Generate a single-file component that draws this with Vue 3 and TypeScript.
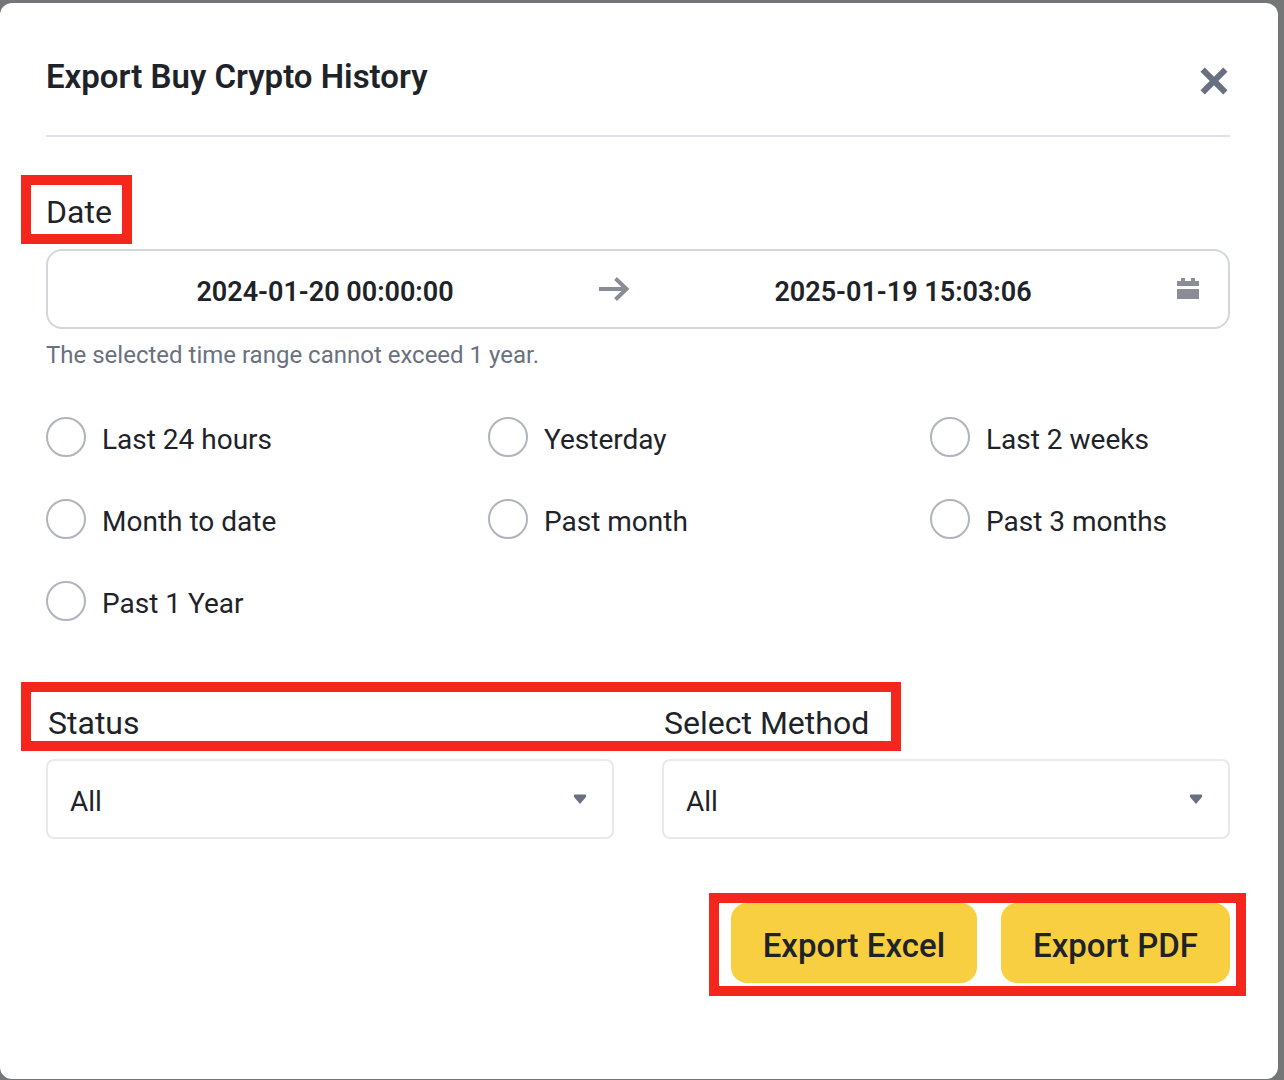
<script setup lang="ts">
import { ref } from 'vue'

interface Range {
  value: string
  label: string
}

const ranges: Range[] = [
  { value: '24h', label: 'Last 24 hours' },
  { value: 'yesterday', label: 'Yesterday' },
  { value: '2w', label: 'Last 2 weeks' },
  { value: 'mtd', label: 'Month to date' },
  { value: '1m', label: 'Past month' },
  { value: '3m', label: 'Past 3 months' },
  { value: '1y', label: 'Past 1 Year' },
]

const filters = [
  { id: 'status', label: 'Status' },
  { id: 'method', label: 'Select Method' },
]

const start = ref('2024-01-20 00:00:00')
const end = ref('2025-01-19 15:03:06')
const range = ref('')
const selected = ref<Record<string, string>>({ status: 'All', method: 'All' })
</script>

<template>
  <div class="backdrop">
    <main class="dialog" role="dialog" aria-labelledby="dialog-title">
      <header class="header">
        <h1 id="dialog-title" class="title">Export Buy Crypto History</h1>
        <button class="close" type="button" aria-label="Close">
          <svg viewBox="0 0 32 32" width="32" height="32" aria-hidden="true">
            <path d="M4.6 4.6 27.4 27.4M27.4 4.6 4.6 27.4" stroke="currentColor" stroke-width="6" />
          </svg>
        </button>
      </header>

      <section class="date">
        <label class="label date-label" for="start">Date<span class="mark mark-date"></span></label>
        <div class="range-field">
          <input id="start" v-model="start" class="range-input" type="text" />
          <svg class="arrow" viewBox="0 0 32 32" width="32" height="32" aria-hidden="true">
            <path d="M1 16H29M17.5 5.5 28.5 16 17.5 26.5" fill="none" stroke="currentColor" stroke-width="4" />
          </svg>
          <input id="end" v-model="end" class="range-input" type="text" aria-label="End date" />
          <svg class="calendar" viewBox="0 0 24 24" width="24" height="24" aria-hidden="true">
            <path d="M1 4H5V1H9V4H15V1H19V4H23V9H1ZM1 12H23V22H1Z" fill="currentColor" />
          </svg>
        </div>
        <p class="hint">The selected time range cannot exceed 1 year.</p>
      </section>

      <div class="presets" role="radiogroup" aria-label="Date range">
        <label v-for="r in ranges" :key="r.value" class="preset">
          <input v-model="range" class="radio" type="radio" name="range" :value="r.value" />
          <span class="preset-text">{{ r.label }}</span>
        </label>
      </div>

      <section class="filters">
        <div v-for="f in filters" :key="f.id" class="filter">
          <label class="label filter-label" :for="f.id">{{ f.label }}</label>
          <div class="select-wrap">
            <select :id="f.id" v-model="selected[f.id]" class="select">
              <option>All</option>
            </select>
            <svg class="caret" viewBox="0 0 12 10" width="12" height="10" aria-hidden="true">
              <path d="M0 0.5H12V3L6 10 0 3Z" fill="currentColor" />
            </svg>
          </div>
        </div>
        <span class="mark mark-filters"></span>
      </section>

      <footer class="footer">
        <div class="actions">
          <button class="export" type="button">Export Excel</button>
          <button class="export" type="button">Export PDF</button>
          <span class="mark mark-actions"></span>
        </div>
      </footer>
    </main>
  </div>
</template>

<style>
body {
  margin: 0;
}
</style>

<style scoped>
.backdrop,
.backdrop * {
  box-sizing: border-box;
}

.backdrop {
  display: flex;
  min-height: 100vh;
  padding: 3px 6px 1px 0;
  background: #757678;
  color: #1e2329;
  font-family: Roboto, 'Liberation Sans', sans-serif;
}

.dialog {
  flex: 1;
  min-width: 0;
  padding: 54px 48px 48px 46px;
  border-radius: 12px;
  background: #fff;
}

.header {
  display: flex;
  align-items: center;
  justify-content: space-between;
  padding-bottom: 38px;
  border-bottom: 2px solid #dfe2e6;
}

.title {
  margin: 0;
  font-size: 33px;
  font-weight: 600;
  line-height: 40px;
}

.close {
  width: 32px;
  height: 32px;
  margin-top: 8px;
  padding: 0;
  border: 0;
  background: none;
  color: #697180;
}

.close svg,
.arrow,
.calendar {
  display: block;
}

.date {
  display: flex;
  flex-direction: column;
  align-items: flex-start;
  margin-top: 55px;
}

.label {
  display: block;
  font-size: 32px;
  line-height: 40px;
}

.date-label {
  position: relative;
  margin-bottom: 17px;
}

.filter-label {
  margin-bottom: 16px;
  padding-left: 2px;
}

.range-field {
  display: flex;
  align-items: center;
  width: 100%;
  height: 80px;
  padding-right: 24px;
  border: 2px solid #d3d7dc;
  border-radius: 16px;
  color: #8a8d95;
}

.range-input {
  flex: 1;
  min-width: 0;
  height: 100%;
  padding: 6px 0 0;
  border: 0;
  outline: 0;
  background: none;
  color: #1e2329;
  font: 600 27px Roboto, 'Liberation Sans', sans-serif;
  text-align: center;
}

.arrow {
  flex: none;
  margin: 0 -4px;
}

.calendar {
  flex: none;
  margin: 0 4px 0 -4px;
}

.hint {
  margin: 10px 0 0;
  color: #697180;
  font-size: 24px;
  line-height: 32px;
}

.presets {
  display: grid;
  grid-template-columns: repeat(3, 1fr);
  gap: 42px 142px;
  margin-top: 46px;
}

.preset {
  display: flex;
  align-items: center;
  gap: 16px;
  height: 40px;
  font-size: 28px;
  white-space: nowrap;
}

.preset-text {
  padding-top: 4px;
}

.radio {
  flex: none;
  appearance: none;
  width: 40px;
  height: 40px;
  margin: 0;
  border: 2px solid #b0b4bc;
  border-radius: 50%;
}

.radio:checked {
  border: 12px solid #f8cf40;
}

.filters {
  position: relative;
  display: grid;
  grid-template-columns: 1fr 1fr;
  gap: 48px;
  margin-top: 82px;
}

.select-wrap {
  display: grid;
  align-items: center;
}

.select-wrap > * {
  grid-area: 1 / 1;
}

.select {
  appearance: none;
  width: 100%;
  height: 80px;
  padding: 4px 64px 0 22px;
  border: 2px solid #e9e9e9;
  border-radius: 8px;
  background: #fff;
  color: #1e2329;
  font: 400 28px Roboto, 'Liberation Sans', sans-serif;
}

.caret {
  justify-self: end;
  margin-right: 28px;
  color: #697180;
  pointer-events: none;
}

.footer {
  display: flex;
  justify-content: flex-end;
  margin-top: 64px;
}

.actions {
  position: relative;
  display: flex;
  gap: 24px;
}

.export {
  height: 80px;
  padding: 4px 32px 0;
  border: 0;
  border-radius: 16px;
  background: #f8cf40;
  color: #1e2329;
  font: 500 33px Roboto, 'Liberation Sans', sans-serif;
}

/* Red callout frames laid over the form */
.mark {
  position: absolute;
  border: 10px solid #f5261b;
  pointer-events: none;
}

.mark-date {
  inset: -17px -20px -12px -25px;
}

.mark-filters {
  top: -21px;
  left: -25px;
  width: calc(50% + 288px);
  height: 69px;
}

.mark-actions {
  inset: -10px -16px -13px -22px;
}
</style>
